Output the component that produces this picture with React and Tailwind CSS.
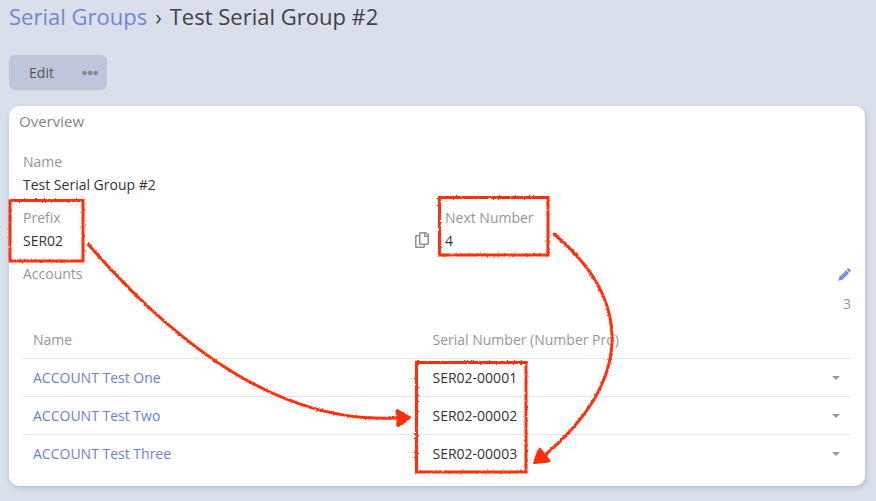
import { FaRegCopy } from "react-icons/fa";

const accounts = [
  { name: "ACCOUNT Test One", serial: "SER02-00001" },
  { name: "ACCOUNT Test Two", serial: "SER02-00002" },
  { name: "ACCOUNT Test Three", serial: "SER02-00003" },
];

function Header() {
  return (
    <h1 className="flex h-[35px] items-start gap-[8px] pt-[1px] text-[22px] leading-[30px] whitespace-nowrap text-[#414141]">
      <a className="text-[#6f87d0]">Serial Groups</a>
      <span>›</span>
      <span>Test Serial Group #2</span>
    </h1>
  );
}

function Actions() {
  return (
    <div className="mt-5 flex h-[35px] w-[98px] items-center rounded-md bg-[#c0c5dc]">
      <button className="w-[65px] text-center text-[#555]">Edit</button>
      <button className="w-[33px]">
        <svg className="ml-[8px] block" width="17" height="6" fill="#888">
          <circle cx="2.500" cy="3" r="2.300" />
          <circle cx="8" cy="3" r="2.300" />
          <circle cx="13.500" cy="3" r="2.300" />
        </svg>
      </button>
    </div>
  );
}

function Field({ label, value }) {
  return (
    <div className="h-14">
      <div className="h-[23px] text-[#969696]">{label}</div>
      <div className="text-[#333]">{value}</div>
    </div>
  );
}

function PencilIcon() {
  return (
    <svg className="mt-1 size-[13px]" viewBox="0 0 13 13" fill="#6f87d0">
      <path d="M0.300 12.700L1.200 9L8 2.200L10.900 5.100L4 12Z" />
      <path d="M8.700 1.500L9.700 0.500Q10.300 0 11 0.600L12.400 2Q13 2.700 12.400 3.400L11.500 4.400Z" />
      <path d="M3 8.800L8 3.800M1.300 10.500L2.500 11.700" stroke="#fff" strokeOpacity=".65" strokeWidth=".7" />
    </svg>
  );
}

function Annotations() {
  return (
    <svg className="pointer-events-none absolute inset-0" width="876" height="501" fill="none" stroke="#ff2f0a" strokeWidth="3">
      <defs>
        <filter id="rough" filterUnits="userSpaceOnUse" x="0" y="0" width="876" height="501">
          <feTurbulence type="fractalNoise" baseFrequency="0.45" numOctaves="2" seed="4" result="n" />
          <feDisplacementMap in="SourceGraphic" in2="n" scale="2.5" xChannelSelector="R" yChannelSelector="G" />
        </filter>
      </defs>
      <g filter="url(#rough)">
        <rect x="10" y="200.500" width="73" height="60.500" />
        <rect x="439.500" y="197.500" width="108.500" height="57.500" />
        <rect x="416.500" y="362.500" width="109.500" height="109.500" />
        <path d="M87.500 243.500C180 350 283 424 396 418" />
        <path d="M553.500 233.500C633 300 633 380 545 455" />
        <path d="M397 410.500L409.500 417.500L398 425.500Z" fill="#ff2f0a" strokeLinejoin="round" />
        <path d="M539.500 449L534.500 462.500L549 461Z" fill="#ff2f0a" strokeLinejoin="round" />
      </g>
    </svg>
  );
}

export default function App() {
  return (
    <div className="relative h-[501px] w-[876px] overflow-hidden bg-[#d9e0ec] pl-[9px] font-['Open_Sans',sans-serif] text-[14px] leading-5">
      <Header />
      <Actions />
      <main className="mt-4 h-[380px] w-[856px] rounded-[10px] bg-white px-[14px] shadow-[1px_2px_5px_rgba(90,110,140,0.3)]">
        <h2 className="-ml-1 h-[46px] pt-[5px] text-[15px] text-[#858585]">Overview</h2>
        <Field label="Name" value="Test Serial Group #2" />
        <div className="grid grid-cols-[392px_30px_1fr]">
          <Field label="Prefix" value="SER02" />
          <FaRegCopy className="mt-[24px] h-4 w-[14px] text-[#929292]" />
          <Field label="Next Number" value="4" />
        </div>
        <div className="flex h-[30px] justify-between text-[#969696]">
          <span>Accounts</span>
          <PencilIcon />
        </div>
        <div className="h-[26px] text-right text-[#969696]">3</div>
        <div className="grid h-[39px] grid-cols-[399.5px_1fr] items-center border-b border-[#e3e3f3] px-[10px] pt-[2px] text-[#969696]">
          <span>Name</span>
          <span>Serial Number (Number Pro)</span>
        </div>
        {accounts.map((a) => (
          <div key={a.name} className="grid h-[38px] grid-cols-[399.5px_1fr_9px] items-center border-b border-[#e3e3f3] px-[10px] text-[#333] last:border-transparent">
            <a className="text-[#6a82cc]">{a.name}</a>
            <span>{a.serial}</span>
            <span className="h-0 w-0 border-x-4 border-t-4 border-x-transparent border-t-[#999]" />
          </div>
        ))}
      </main>
      <Annotations />
    </div>
  );
}
